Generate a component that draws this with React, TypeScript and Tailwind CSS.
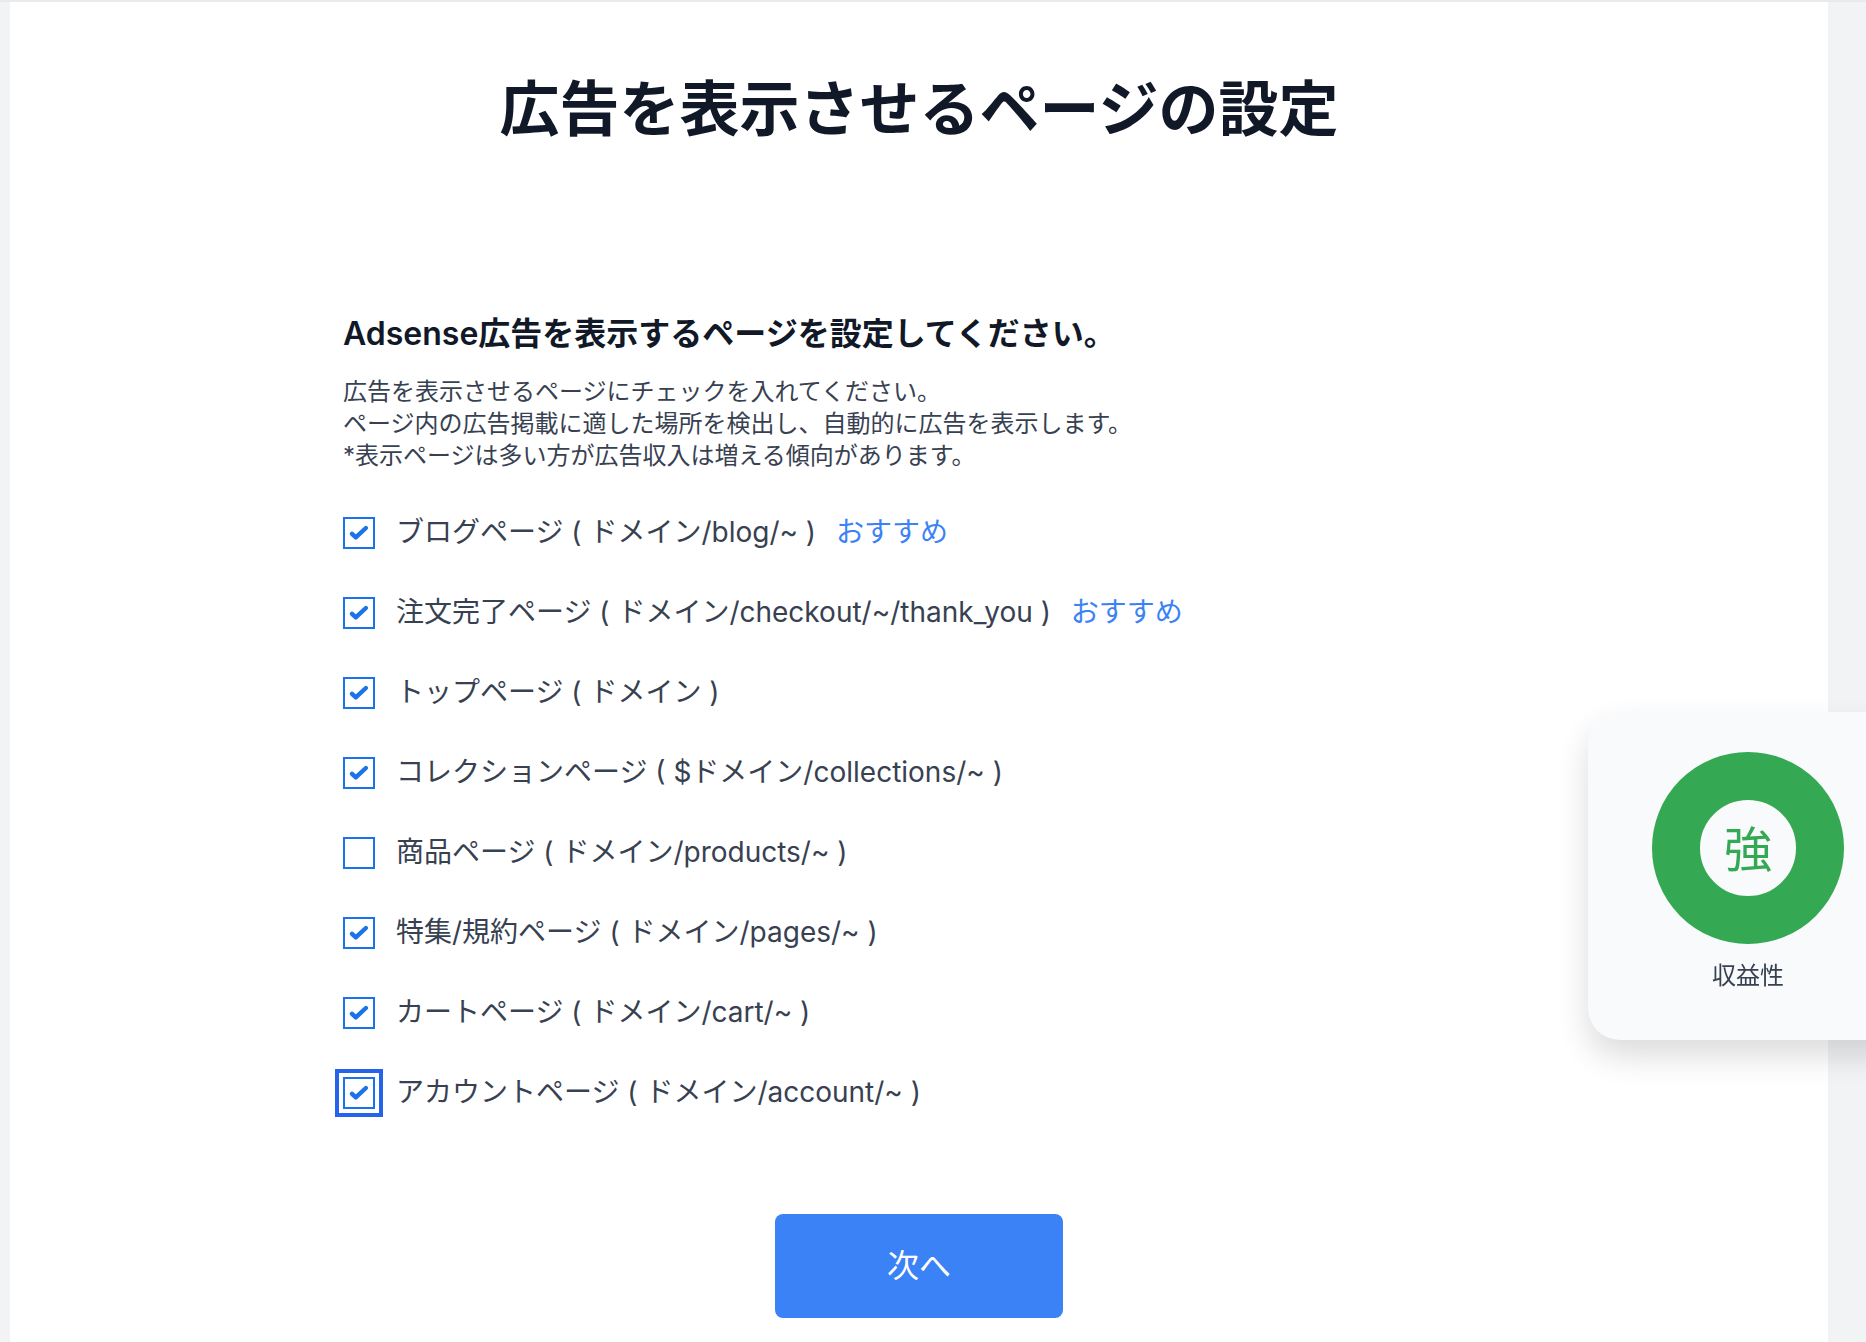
import { useState } from "react";

interface PageOption {
  id: string;
  label: string;
  recommended?: boolean;
}

const pageOptions: PageOption[] = [
  { id: "blog", label: "ブログページ ( ドメイン/blog/~ )", recommended: true },
  {
    id: "checkout",
    label: "注文完了ページ ( ドメイン/checkout/~/thank_you )",
    recommended: true,
  },
  { id: "top", label: "トップページ ( ドメイン )" },
  { id: "collections", label: "コレクションページ ( $ドメイン/collections/~ )" },
  { id: "products", label: "商品ページ ( ドメイン/products/~ )" },
  { id: "pages", label: "特集/規約ページ ( ドメイン/pages/~ )" },
  { id: "cart", label: "カートページ ( ドメイン/cart/~ )" },
  { id: "account", label: "アカウントページ ( ドメイン/account/~ )" },
];

interface PageCheckboxProps {
  option: PageOption;
  checked: boolean;
  autoFocus: boolean;
  onToggle: () => void;
}

const PageCheckbox = ({
  option,
  checked,
  autoFocus,
  onToggle,
}: PageCheckboxProps) => {
  return (
    <li className="flex h-8 items-center">
      <span className="grid size-8 shrink-0">
        <input
          id={option.id}
          type="checkbox"
          checked={checked}
          autoFocus={autoFocus}
          onChange={onToggle}
          className="col-start-1 row-start-1 size-8 appearance-none border-2 border-[#1a73e8] bg-white outline-none focus:ring-4 focus:ring-[#2563eb] focus:ring-offset-4"
        />
        {checked && (
          <svg
            viewBox="0 0 32 32"
            fill="none"
            className="pointer-events-none z-10 col-start-1 row-start-1 size-8"
          >
            <path
              d="M9 16.8L12.8 20.4L22.9 11"
              stroke="#1a73e8"
              strokeWidth="4.4"
              strokeLinecap="round"
              strokeLinejoin="round"
            />
          </svg>
        )}
      </span>
      <label
        htmlFor={option.id}
        className="pb-0.5 pl-[21px] text-[28px] leading-8 text-[#374151]"
      >
        {option.label}
      </label>
      {option.recommended && (
        <span className="pb-0.5 pl-5 text-[28px] leading-8 text-[#3b82f6]">
          おすすめ
        </span>
      )}
    </li>
  );
};

const ProfitabilityCard = () => {
  return (
    <aside className="fixed top-[712px] -right-8 flex flex-col items-center rounded-l-[32px] bg-[#f8fafc] pt-10 pr-[54px] pb-12 pl-16 shadow-[0_16px_32px_rgba(0,0,0,0.14)]">
      <div className="flex size-48 items-center justify-center rounded-full border-48 border-[#34a853] pt-1 text-5xl text-[#34a853]">
        強
      </div>
      <p className="pt-4 text-2xl leading-8 text-[#374151]">収益性</p>
    </aside>
  );
};

export default function App() {
  const [selected, setSelected] = useState<string[]>(
    pageOptions.map((o) => o.id).filter((id) => id !== "products")
  );

  const toggle = (id: string) => {
    setSelected((prev) =>
      prev.includes(id) ? prev.filter((p) => p !== id) : [...prev, id]
    );
  };

  return (
    <div className="flex min-h-screen flex-col border-t-2 border-[#e9eaeb] bg-[#f2f3f5] pr-[38px] pl-[10px] font-['Inter','Noto_Sans_CJK_JP',sans-serif]">
      <main className="grow bg-white px-8 pt-[71px] pb-[22px]">
        <h1 className="text-center text-6xl leading-[72px] font-bold text-[#111827]">
          広告を表示させるページの設定
        </h1>

        <form
          className="mx-auto max-w-[1152px] pt-[165px]"
          onSubmit={(e) => e.preventDefault()}
        >
          <h2 className="text-[32px] leading-12 font-semibold text-[#111827]">
            Adsense広告を表示するページを設定してください。
          </h2>
          <p className="pt-[18px] text-2xl leading-8 text-[#374151]">
            広告を表示させるページにチェックを入れてください。
            <br />
            ページ内の広告掲載に適した場所を検出し、自動的に広告を表示します。
            <br />
            *表示ページは多い方が広告収入は増える傾向があります。
          </p>

          <ul className="flex flex-col gap-12 pt-[45px]">
            {pageOptions.map((option) => (
              <PageCheckbox
                key={option.id}
                option={option}
                checked={selected.includes(option.id)}
                autoFocus={option.id === "account"}
                onToggle={() => toggle(option.id)}
              />
            ))}
          </ul>

          <div className="flex justify-center pt-[105px]">
            <button
              type="submit"
              className="h-[104px] w-72 rounded-lg bg-[#3b82f6] text-[32px] text-white"
            >
              次へ
            </button>
          </div>
        </form>
      </main>

      <ProfitabilityCard />
    </div>
  );
}
